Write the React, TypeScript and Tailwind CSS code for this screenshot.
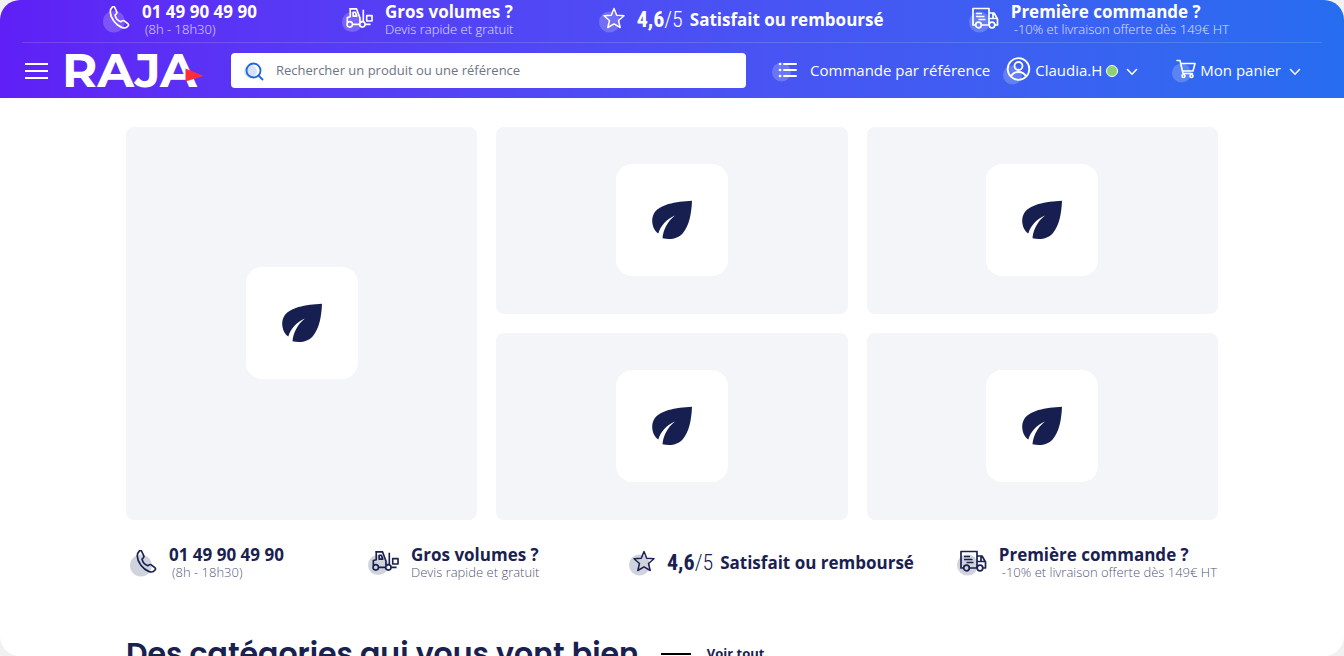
import React from 'react';

interface IconProps {
  className?: string;
}

const PhoneIcon: React.FC<IconProps> = ({ className = '' }) => (
  <svg viewBox="0 0 26 26" className={className} fill="none" aria-hidden="true">
    <circle cx="10.500" cy="15" r="10.500" fill="currentColor" opacity=".2" />
    <path
      d="M8.900 1c.8-.8 1.800-.7 2.300.2l2 4.200c.4.900.2 1.700-.5 2.300l-1.100 1c.5 2.600 2.900 5.400 5.500 6.500l1.400-.9c.8-.5 1.600-.4 2.300.2l3.100 2.500c.8.700.8 1.600.2 2.300-1.500 2-3.600 2.300-6.100 1.300C12.500 18.500 7.200 11.900 7 5.900c-.1-1.900.600-3.600 1.900-4.900Z"
      stroke="currentColor"
      strokeWidth="1.600"
      strokeLinejoin="round"
    />
  </svg>
);

const ForkliftIcon: React.FC<IconProps> = ({ className = '' }) => (
  <svg viewBox="0 0 32 26" className={className} fill="none" aria-hidden="true">
    <circle cx="10.500" cy="15" r="10.500" fill="currentColor" opacity=".2" />
    <g stroke="currentColor" strokeWidth="1.700" strokeLinejoin="round">
      <path d="M5.500 15.500v-5l3-.8V1.500h6.500l3.500 9.500v4M7.500 1.500h8M11.500 5h2.300l1.400 4h-3.700zM22 2.500v12M11 17.500h7" />
      <circle cx="8" cy="17.500" r="2.800" />
      <circle cx="21" cy="17.500" r="2.800" />
      <path d="M24 17.500h5.500M25.500 8.500h5.500V14h-5.500z" />
    </g>
  </svg>
);

const StarIcon: React.FC<IconProps> = ({ className = '' }) => (
  <svg viewBox="0 0 26 26" className={className} fill="none" aria-hidden="true">
    <circle cx="10.500" cy="15" r="10.500" fill="currentColor" opacity=".2" />
    <path
      d="m15 1.500 2.700 6.700 7.300.600-5.500 4.700 1.700 7L15 16.800l-6.200 3.700 1.700-7L5 8.800l7.300-.600L15 1.500Z"
      stroke="currentColor"
      strokeWidth="1.500"
      strokeLinejoin="round"
    />
  </svg>
);

const TruckIcon: React.FC<IconProps> = ({ className = '' }) => (
  <svg viewBox="0 0 30 26" className={className} fill="none" aria-hidden="true">
    <circle cx="10.500" cy="15" r="10.500" fill="currentColor" opacity=".2" />
    <g stroke="currentColor" strokeWidth="1.700" strokeLinejoin="round">
      <path d="M6.500 18H4V1.500h16V18h-7.500M20 6h5l3.500 6v6H26M20 11.500h8M24 6v5.500M7 6.500h6M7 9.500h8.500M9.500 12.500h7" />
      <circle cx="9.500" cy="18" r="2.800" />
      <circle cx="23" cy="18" r="2.800" />
    </g>
  </svg>
);

const SearchIcon: React.FC<IconProps> = ({ className = '' }) => (
  <svg viewBox="0 0 20 20" className={className} fill="none" aria-hidden="true">
    <circle cx="6.500" cy="10.500" r="6.500" fill="#2f6fe8" opacity=".2" />
    <circle cx="9.500" cy="9.500" r="7" stroke="#1f66dc" strokeWidth="1.800" />
    <path d="m14.500 14.500 4 4" stroke="#1f66dc" strokeWidth="1.800" strokeLinecap="round" />
  </svg>
);

const ListIcon: React.FC<IconProps> = ({ className = '' }) => (
  <svg viewBox="0 0 26 22" className={className} fill="none" aria-hidden="true">
    <circle cx="9.500" cy="12" r="9.500" fill="#fff" opacity=".2" />
    <path d="M12 4h12M12 10h12M12 16h12" stroke="#fff" strokeWidth="2" strokeLinecap="round" />
    <path d="M8 4h.1M8 10h.1M8 16h.1" stroke="#fff" strokeWidth="2.600" strokeLinecap="round" />
  </svg>
);

const UserIcon: React.FC<IconProps> = ({ className = '' }) => (
  <svg viewBox="0 0 28 28" className={className} fill="none" aria-hidden="true">
    <circle cx="9.500" cy="18" r="9.500" fill="#fff" opacity=".2" />
    <g stroke="#fff" strokeWidth="1.800">
      <circle cx="15.500" cy="12" r="10.800" />
      <circle cx="15.500" cy="9" r="4" />
      <path d="M8 19.500c1.500-3 4-4.500 7.500-4.500s6 1.500 7.500 4.500" />
    </g>
  </svg>
);

const CartIcon: React.FC<IconProps> = ({ className = '' }) => (
  <svg viewBox="0 0 24 24" className={className} fill="none" aria-hidden="true">
    <circle cx="9.500" cy="14" r="9.500" fill="#fff" opacity=".2" />
    <g stroke="#fff" strokeWidth="1.600" strokeLinecap="round" strokeLinejoin="round">
      <path d="M5 1.500h3l3 13h9.500M8.700 4.500H23l-2 7.500H10.500" />
      <circle cx="11.500" cy="17" r="1.500" />
      <circle cx="19.500" cy="17" r="1.500" />
    </g>
  </svg>
);

const ChevronIcon: React.FC<IconProps> = ({ className = '' }) => (
  <svg viewBox="0 0 12 10" className={className} fill="none" aria-hidden="true">
    <path d="m1.500 3.500 4.500 4.700 4.500-4.700" stroke="#fff" strokeWidth="1.600" strokeLinecap="round" />
  </svg>
);

const LeafIcon: React.FC<IconProps> = ({ className = '' }) => (
  <svg viewBox="0 0 40 40" className={className} aria-hidden="true">
    <path
      fill="#171f50"
      d="M40 .800C39.500 14 37 26 31 33c-5 6-13 7-20.500 5.200C11 31 15 21.500 23 15.500 14.500 19 8.500 26 6.300 33.500 1 30 -1.500 21 1.500 14.500 6 4.500 24 1.500 40 .800Z"
    />
  </svg>
);

interface ReassuranceProps {
  className: string;
  subClassName: string;
}

/* Four selling points, shown in the header and again under the tiles */
const Reassurance: React.FC<ReassuranceProps> = ({ className, subClassName }) => (
  <ul className={className}>
    <li className="flex items-center gap-3">
      <PhoneIcon className="h-[27px] w-[27px] shrink-0" />
      <div className="whitespace-nowrap">
        <p className="text-[17px] leading-[18px] font-bold">01 49 90 49 90</p>
        <p className={`pl-[3px] text-[13px] leading-4 font-light ${subClassName}`}>(8h - 18h30)</p>
      </div>
    </li>
    <li className="flex items-center gap-3">
      <ForkliftIcon className="h-[26px] w-[31px] shrink-0" />
      <div className="whitespace-nowrap">
        <p className="text-[17px] leading-[18px] font-bold">Gros volumes ?</p>
        <p className={`text-[13px] leading-4 font-light ${subClassName}`}>Devis rapide et gratuit</p>
      </div>
    </li>
    <li className="flex items-center gap-3">
      <StarIcon className="h-[26px] w-[26px] shrink-0" />
      <p className="flex items-center gap-[7px] whitespace-nowrap">
        <span className="font-['Roboto_Condensed','Liberation_Sans_Narrow','Open_Sans',sans-serif] text-[22px] leading-6 font-bold">
          4,6<span className="font-light">/5</span>
        </span>
        <span className="text-[17px] leading-[18px] font-bold">Satisfait ou remboursé</span>
      </p>
    </li>
    <li className="flex items-center gap-3">
      <TruckIcon className="h-[26px] w-[30px] shrink-0" />
      <div className="whitespace-nowrap">
        <p className="text-[17px] leading-[18px] font-bold">Première commande ?</p>
        <p className={`pl-[3px] text-[13px] leading-4 font-light ${subClassName}`}>
          -10% et livraison offerte dès 149€ HT
        </p>
      </div>
    </li>
  </ul>
);

const Tile: React.FC<{ className?: string }> = ({ className = '' }) => (
  <a
    href="#"
    aria-label="Découvrir"
    className={`flex min-h-[187px] items-center justify-center rounded-lg bg-[#f4f5f9] pb-[2px] ${className}`}
  >
    <span className="flex h-28 w-28 items-center justify-center rounded-2xl bg-white">
      <LeafIcon className="h-10 w-10" />
    </span>
  </a>
);

const Header: React.FC = () => (
  <header className="bg-linear-to-r from-[#5f1ff6] to-[#266df0] px-[22px] pb-[10px] text-white">
    <Reassurance
      className="flex h-[43px] items-center justify-between border-b border-white/15 pr-[93px] pb-[3px] pl-[81px]"
      subClassName="text-white/80"
    />
    <div className="flex items-center pt-[10px]">
      <button type="button" aria-label="Menu" className="flex w-7 flex-col items-center gap-[5px]">
        <span className="h-[2px] w-[23px] bg-white" />
        <span className="h-[2px] w-[23px] bg-white" />
        <span className="h-[2px] w-[23px] bg-white" />
      </button>

      <a
        href="#"
        className="relative ml-3 w-[142px] font-['Montserrat','Poppins','Inter',sans-serif] text-[48px] leading-[35px] font-bold"
      >
        RAJA
        <svg viewBox="0 0 19 14" className="absolute right-0 bottom-[6px] h-[14px] w-[19px]" aria-hidden="true">
          <path d="M.500.500 18.500 8 .500 13.500Z" fill="#ff2d37" />
        </svg>
      </a>

      <label className="ml-[27px] flex h-[35px] flex-1 items-center gap-3 rounded bg-white pl-[13px]">
        <SearchIcon className="h-5 w-5 shrink-0" />
        <span className="sr-only">Rechercher</span>
        <input
          type="search"
          placeholder="Rechercher un produit ou une référence"
          className="min-w-0 flex-1 bg-transparent text-[13px] text-gray-700 outline-none placeholder:text-[#6d7486]"
        />
      </label>

      <nav className="flex items-center text-[15px] whitespace-nowrap">
        <a href="#" className="ml-[26px] flex items-center gap-3">
          <ListIcon className="h-[22px] w-[26px]" />
          Commande par référence
        </a>
        <button type="button" className="ml-[13px] flex items-center gap-1">
          <UserIcon className="h-7 w-7" />
          Claudia.H
          <span className="h-3 w-3 rounded-full border border-white bg-[#8fd070]" />
          <ChevronIcon className="ml-1 h-[10px] w-3" />
        </button>
        <button type="button" className="mr-[21px] ml-[34px] flex items-center gap-1">
          <CartIcon className="h-6 w-6" />
          Mon panier
          <ChevronIcon className="ml-1 h-[10px] w-3" />
        </button>
      </nav>
    </div>
  </header>
);

const App: React.FC = () => (
  <div className="h-screen bg-[#f1f1f1] font-['Open_Sans','Noto_Sans',sans-serif]">
    <div className="h-full overflow-hidden rounded-[20px] bg-white text-[#1a2150]">
      <Header />
      <main className="mx-auto w-full max-w-[1092px] pt-[29px]">
        <div className="grid grid-cols-3 gap-[19px]">
          <Tile className="row-span-2" />
          <Tile />
          <Tile />
          <Tile />
          <Tile />
        </div>

        <Reassurance
          className="mt-[26px] grid grid-cols-[238px_261px_1fr_auto] items-center pr-px pl-1"
          subClassName="text-[#1a2150]/80"
        />

        <div className="mt-[54px] flex items-center gap-[22px]">
          <h2 className="font-['Poppins','Inter',sans-serif] text-[30px] leading-10 font-semibold">
            Des catégories qui vous vont bien
          </h2>
          <a href="#" className="flex items-center gap-4 text-[13px] font-bold">
            <span className="h-[2px] w-[30px] bg-black" />
            Voir tout
          </a>
        </div>
      </main>
    </div>
  </div>
);

export default App;
